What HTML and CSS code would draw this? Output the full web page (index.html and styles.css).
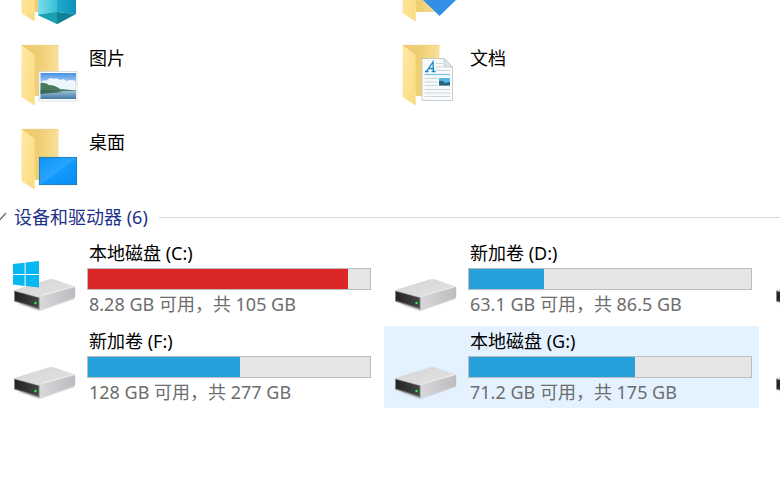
FILE: index.html
```html
<!DOCTYPE html>
<html lang="zh-CN">
<head>
<meta charset="utf-8">
<title>此电脑</title>
<link rel="stylesheet" href="styles.css">
</head>
<body>
<svg class="defs" aria-hidden="true">
  <defs>
    <linearGradient id="g-flap" x1="0" y1="0" x2="1" y2="1"><stop offset="0" stop-color="#ffe9a6"/><stop offset="1" stop-color="#fadb80"/></linearGradient>
    <linearGradient id="g-back" x1="0" y1="0" x2="1" y2="0"><stop offset="0" stop-color="#edca6c"/><stop offset=".5" stop-color="#efcf76"/><stop offset="1" stop-color="#fae09a"/></linearGradient>
    <linearGradient id="g-screen" x1="0" y1="0" x2="1" y2="1"><stop offset="0" stop-color="#0d96f5"/><stop offset=".5" stop-color="#27a4ff"/><stop offset=".52" stop-color="#119aff"/><stop offset="1" stop-color="#0b8df0"/></linearGradient>
    <linearGradient id="g-sky" x1="0" y1="0" x2="0" y2="1"><stop offset="0" stop-color="#4b91e4"/><stop offset=".5" stop-color="#c6e2f8"/></linearGradient>
    <linearGradient id="g-water" x1="0" y1="0" x2="0" y2="1"><stop offset="0" stop-color="#9dc0d8"/><stop offset="1" stop-color="#3f78a3"/></linearGradient>
    <linearGradient id="g-cube-l" x1="0" y1="0" x2="1" y2="0"><stop offset="0" stop-color="#7bddeb"/><stop offset="1" stop-color="#38bfd8"/></linearGradient>
    <linearGradient id="g-cube-r" x1="0" y1="0" x2="1" y2="0"><stop offset="0" stop-color="#22aacb"/><stop offset="1" stop-color="#0b91bb"/></linearGradient>
    <linearGradient id="g-drive-top" x1="0" y1="0" x2="1" y2="1"><stop offset="0" stop-color="#d4d4d6"/><stop offset="1" stop-color="#e4e4e6"/></linearGradient>
    <linearGradient id="g-drive-side" x1="0" y1="0" x2="1" y2="0"><stop offset="0" stop-color="#d9d9db"/><stop offset="1" stop-color="#bcbcc0"/></linearGradient>
    <linearGradient id="g-drive-front" x1="0" y1="0" x2="1" y2="0"><stop offset="0" stop-color="#242424"/><stop offset="1" stop-color="#444"/></linearGradient>
    <g id="folder">
      <path d="M9.500 3H46.500V54H23L18 20Z" fill="url(#g-back)"/>
      <path d="M9.500 3L21 11.500Q22.700 13 22.700 15V62.500Q22.500 63.500 21 62.500L9.500 55Z" fill="url(#g-flap)"/>
      <path d="M10 3.300H46.500" stroke="#e9cc7c" stroke-width=".6"/>
    </g>
    <g id="drive">
      <path d="M5 56L27 63.500L63 51L62 48L27 58Z" fill="#999" opacity=".25"/>
      <path d="M2 42L36.500 31.500Q39 30.500 41.500 31.300L61.500 38Q63.500 39 62.500 40L27 51Z" fill="url(#g-drive-top)"/>
      <path d="M27 49.500Q27.500 48 30 47L60.500 38.300Q63.200 38 63.200 40V48.500Q63 50 61.500 50.600L30 61.400Q27.500 62 27 61Z" fill="url(#g-drive-side)"/>
      <path d="M27.500 49L31 47L62 38.500" fill="none" stroke="#e9e9ea" stroke-width="1.400"/>
      <path d="M2 42.500L27.500 49.500V62L2 53.500Z" fill="#858587"/>
      <path d="M3 43.500L26.500 50V60L3 52.500Z" fill="url(#g-drive-front)"/>
      <circle cx="23.500" cy="55" r="1.700" fill="#158b25"/><circle cx="23.500" cy="55" r=".9" fill="#4cff62"/>
    </g>
  </defs>
</svg>

<main class="view">
  <section class="tiles folders" aria-label="文件夹">
    <div class="tile folder peek">
      <svg class="icon" viewBox="0 0 64 64" aria-hidden="true">
        <use href="#folder"/>
        <path d="M23 54h5l-2 7h-3z" fill="#fff"/>
        <path d="M26 30L45 24V54L26 57Z" fill="url(#g-cube-l)"/>
        <path d="M45 24L64 30V56L45 54Z" fill="url(#g-cube-r)"/>
        <path d="M26 57L45 54L64 56L45.500 66Z" fill="#108296"/>
        <path d="M26 57L45 54V66Z" fill="#18a1af"/>
      </svg>
    </div>
    <div class="tile folder peek">
      <svg class="icon" viewBox="0 0 64 64" aria-hidden="true">
        <use href="#folder"/>
        <path d="M38 24H54V42H63L46.500 58L30 42H38Z" fill="#318fe5"/>
      </svg>
    </div>
    <div class="tile folder">
      <svg class="icon" viewBox="0 0 64 64" aria-hidden="true">
        <use href="#folder"/>
        <rect x="27" y="29.500" width="38" height="29.500" fill="#fff" stroke="#ccc" stroke-width=".6"/>
        <rect x="28.500" y="31" width="35.500" height="26" fill="url(#g-sky)"/>
        <path d="M28.500 41q3-4 6-2q3-5 7-2q4-2 6 1q5-2 7 1q5-2 9 0V48H28.500Z" fill="#edf6fc"/>
        <path d="M28.500 41Q33 40 37 43Q43 43 48 47L64 48.500V50H28.500Z" fill="#4a7a5c"/>
        <path d="M28.500 49H64V57H28.500Z" fill="url(#g-water)"/>
        <path d="M28.500 48Q40 47 51 50L28.500 52Z" fill="#3d6a5a"/>
      </svg>
      <span class="name">图片</span>
    </div>
    <div class="tile folder">
      <svg class="icon" viewBox="0 0 64 64" aria-hidden="true">
        <use href="#folder"/>
        <path d="M29 16.500H51L59.500 25V58.500H29Z" fill="#f8fafc" stroke="#b9c0c5" stroke-width=".8"/>
        <path d="M51 16.500V25H59.500Z" fill="#dfe6ea" stroke="#b9c0c5" stroke-width=".7"/>
        <path d="M43 21.500H49.500M43 25H50M43 28.500H57M31.500 36.500H45M31.500 40H45M31.500 43.500H45M31.500 47.500H57M31.500 51H57M31.500 54.500H57" stroke="#c9d0d6" stroke-width=".9"/>
        <path d="M31.500 32.500H57" stroke="#7cc4e6" stroke-width="1.200"/>
        <path d="M32 29.500H35.500M33.500 29.500L40 20L40.500 29.500M35.500 26.500H40.500M38.500 29.500H42.500" fill="none" stroke="#1782bf" stroke-width="1.300"/>
        <rect x="46" y="36" width="11" height="7.500" fill="#58b5e5"/>
        <path d="M46 39Q50 38 52 41L57 40V43.500H46Z" fill="#286380"/>
      </svg>
      <span class="name">文档</span>
    </div>
    <div class="tile folder">
      <svg class="icon" viewBox="0 0 64 64" aria-hidden="true">
        <use href="#folder"/>
        <path d="M23 54h5v5l-3 3l-2-1z" fill="#fff"/>
        <rect x="27.400" y="31.400" width="37.200" height="27.200" fill="url(#g-screen)" stroke="#1c77b6" stroke-width=".9"/>
      </svg>
      <span class="name">桌面</span>
    </div>
  </section>

  <h2 class="group">
    <svg class="chevron" viewBox="0 0 14 26" aria-hidden="true"><path d="M-5 9.500L0 15.500L6 9" fill="none" stroke="#666" stroke-width="1.200"/></svg>
    设备和驱动器 (6)
  </h2>

  <section class="tiles drives" aria-label="设备和驱动器">
    <div class="tile drive">
      <svg class="icon" viewBox="0 0 64 64" aria-hidden="true">
        <use href="#drive"/>
        <path d="M1 16L12.600 14.700V26H1ZM13.600 14.500L27 13V26H13.600ZM1 27H12.600V38L1 36.400ZM13.600 27H27V39.500L13.600 38Z" fill="#06b8f2"/>
      </svg>
      <div class="info">
        <span class="name">本地磁盘 (C:)</span>
        <div class="bar"><div class="fill full" style="width:92.300%"></div></div>
        <span class="space">8.28 GB 可用，共 105 GB</span>
      </div>
    </div>
    <div class="tile drive">
      <svg class="icon" viewBox="0 0 64 64" aria-hidden="true"><use href="#drive"/></svg>
      <div class="info">
        <span class="name">新加卷 (D:)</span>
        <div class="bar"><div class="fill" style="width:26.700%"></div></div>
        <span class="space">63.1 GB 可用，共 86.5 GB</span>
      </div>
    </div>
    <div class="tile drive">
      <svg class="icon" viewBox="0 0 64 64" aria-hidden="true"><use href="#drive"/></svg>
    </div>
    <div class="tile drive">
      <svg class="icon" viewBox="0 0 64 64" aria-hidden="true"><use href="#drive"/></svg>
      <div class="info">
        <span class="name">新加卷 (F:)</span>
        <div class="bar"><div class="fill" style="width:53.900%"></div></div>
        <span class="space">128 GB 可用，共 277 GB</span>
      </div>
    </div>
    <div class="tile drive hover">
      <svg class="icon" viewBox="0 0 64 64" aria-hidden="true"><use href="#drive"/></svg>
      <div class="info">
        <span class="name">本地磁盘 (G:)</span>
        <div class="bar"><div class="fill" style="width:58.900%"></div></div>
        <span class="space">71.2 GB 可用，共 175 GB</span>
      </div>
    </div>
    <div class="tile drive">
      <svg class="icon" viewBox="0 0 64 64" aria-hidden="true"><use href="#drive"/></svg>
    </div>
  </section>
</main>
</body>
</html>
```
FILE: styles.css
```css
* { box-sizing: border-box; }

body {
  margin: 0;
  background: #fff;
  color: #000;
  font: 18px/24px "Noto Sans", "Noto Sans CJK SC", sans-serif;
}

.defs {
  display: block;
  width: 0;
  height: 0;
}

.view { overflow: hidden; }

.tiles {
  display: grid;
  gap: 6px;
  padding-left: 3px;
}

.folders { grid-template-columns: repeat(2, 375px); }
.drives { grid-template-columns: repeat(3, 375px); }

.tile {
  display: flex;
  gap: 11px;
  padding: 0 7px 0 9px;
}

.icon {
  flex: none;
  width: 64px;
  height: 64px;
  overflow: visible;
}

.folder {
  height: 78px;
  padding-top: 6px;
}

/* Row scrolled partly out of view: only its lower edge shows. */
.peek {
  height: 30px;
  padding: 0 7px 8px 9px;
  align-items: flex-end;
  overflow: hidden;
}

.name,
.space { padding-left: 2px; }

.folder .name { margin-top: 4px; }

.group {
  display: flex;
  align-items: center;
  margin: 6px 0 8px;
  color: #1e3287;
  font-size: 18px;
  font-weight: 400;
  line-height: 26px;
}

.group::after {
  content: "";
  flex: 1;
  height: 1px;
  margin-left: 11px;
  background: #d9d9d9;
}

.chevron {
  flex: none;
  width: 14px;
  height: 26px;
}

.drive {
  height: 82px;
  padding-top: 3px;
}

.drive .icon { margin-top: 7px; }

.hover { background: #e3f2fe; }

.info {
  display: flex;
  flex: 1;
  flex-direction: column;
}

.bar {
  height: 22px;
  margin: 3px 0 2px;
  border: 1px solid #bcbcbc;
  background: #e6e6e6;
}

.fill {
  height: 100%;
  background: #26a0da;
}

.full { background: #da2626; }

.space { color: #6d6d6d; }
```
